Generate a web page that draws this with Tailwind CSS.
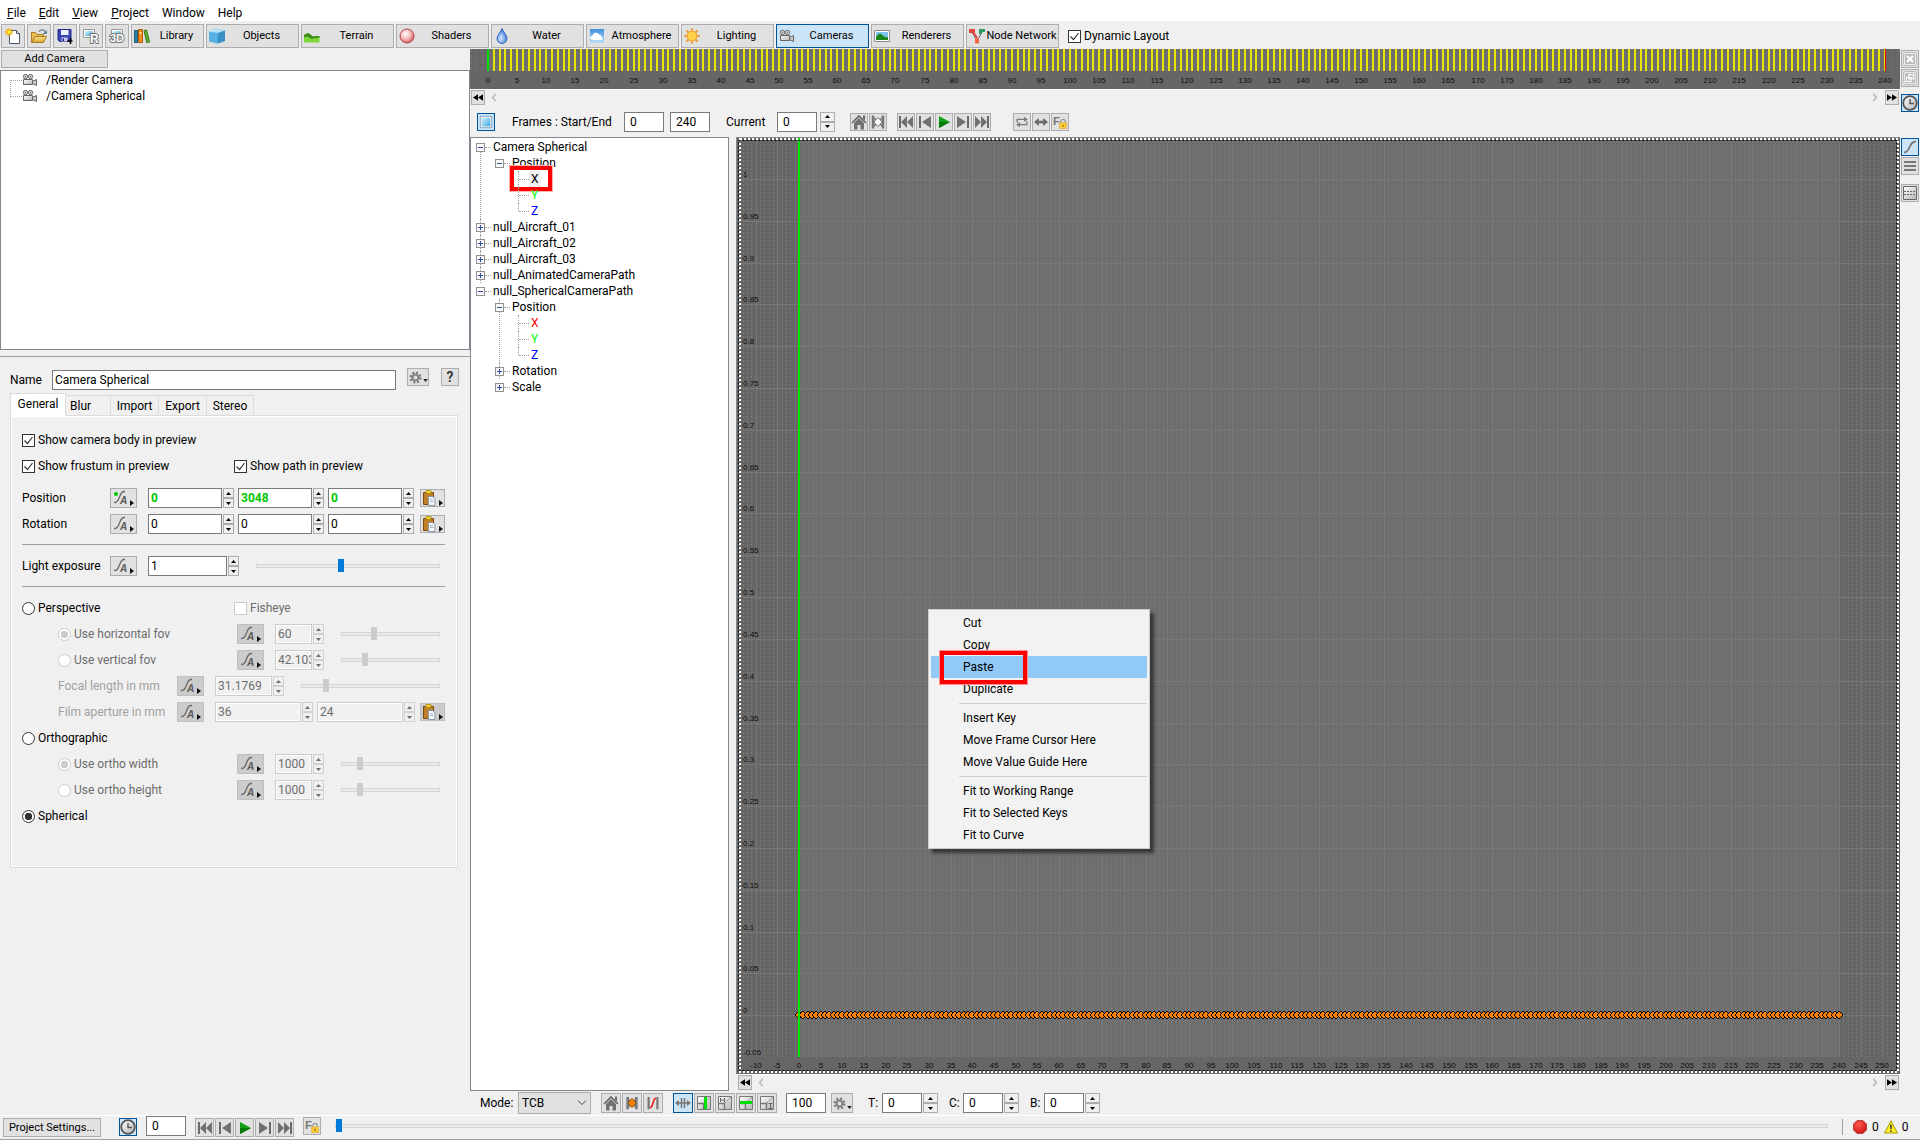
<!DOCTYPE html>
<html lang="en">
<head>
    <meta charset="UTF-8">
    <meta name="viewport" content="width=device-width, initial-scale=1.0">
    <script src="https://cdn.jsdelivr.net/npm/@tailwindcss/browser@4"></script>
    <title>Scene Editor - Cameras</title>
    <style>
        body { font-family: Roboto, "Open Sans", sans-serif; }
        /* native-looking form controls */
        input[type=text] { border: 1px solid #7a7a7a; background: #fff; height: 20px; min-width: 0; padding: 0 0 0 2px; }
        input[type=text]:disabled { border-color: #ccc; background: #f0f0f0; box-shadow: inset 0 0 0 1px #fff; color: #6d6d6d; }
        input[type=checkbox], input[type=radio] { appearance: none; width: 13px; height: 13px; flex: none; background: #fff; border: 1px solid #333; }
        input[type=radio] { border-radius: 50%; }
        input[type=checkbox]:disabled, input[type=radio]:disabled { border-color: #ccc; }
        input[type=checkbox]:checked { background: #fff url("data:image/svg+xml,%3Csvg xmlns='http://www.w3.org/2000/svg' viewBox='0 0 11 11'%3E%3Cpath d='M1.500 5.500l3 3 5-6.500' fill='none' stroke='%23333' stroke-width='1.200'/%3E%3C/svg%3E"); }
        input[type=radio]:checked { background: radial-gradient(circle, #333 3.5px, #fff 4px); }
        input[type=radio]:checked:disabled { background: radial-gradient(circle, #ccc 3.5px, #fff 4px); }
        input[type=range] { appearance: none; height: 13px; min-width: 0; background: transparent; }
        input[type=range]::-webkit-slider-runnable-track { height: 4px; background: #e7eaea; border: 1px solid #d6d6d6; }
        input[type=range]::-webkit-slider-thumb { appearance: none; width: 6px; height: 13px; margin-top: -6px; background: #0078d7; }
        input[type=range]:disabled::-webkit-slider-thumb { background: #ccc; }
        button { border: 1px solid #adadad; background: #e1e1e1; display: flex; align-items: center; justify-content: center; flex: none; }
        button:disabled { background: #ccc; border-color: #bfbfbf; }
        button[aria-pressed=true] { background: #cce4f7; border-color: #005499; }
        svg { flex: none; }
    </style>
</head>
<body class="h-screen flex flex-col overflow-hidden bg-[#f0f0f0] text-black text-[12px] leading-4">

<!-- icon set -->
<svg class="absolute size-0">
    <defs>
        <linearGradient id="g-blue" x1="0" y1="0" x2="1" y2="1"><stop offset="0" stop-color="#d4f0fc"/><stop offset="1" stop-color="#3fa9dd"/></linearGradient>
        <linearGradient id="g-sky" x1="0" y1="0" x2="0" y2="1"><stop offset="0" stop-color="#3d8fe0"/><stop offset="1" stop-color="#b9dcf7"/></linearGradient>
        <linearGradient id="g-gold" x1="0" y1="0" x2="0" y2="1"><stop offset="0" stop-color="#fbe08a"/><stop offset="1" stop-color="#dba22e"/></linearGradient>
        <linearGradient id="g-grey" x1="0" y1="0" x2="1" y2="1"><stop offset="0" stop-color="#ffffff"/><stop offset="1" stop-color="#b5b5b5"/></linearGradient>
        <radialGradient id="g-ball" cx=".4" cy=".35" r=".65"><stop offset="0" stop-color="#fff"/><stop offset=".6" stop-color="#f3b3b3"/><stop offset="1" stop-color="#d85f5f"/></radialGradient>
        <radialGradient id="g-drop" cx=".4" cy=".65" r=".6"><stop offset="0" stop-color="#d6e9ff"/><stop offset="1" stop-color="#3a78d8"/></radialGradient>
        <radialGradient id="g-red" cx=".4" cy=".3" r=".8"><stop offset="0" stop-color="#ff5a50"/><stop offset="1" stop-color="#c80e10"/></radialGradient>
    </defs>
    <symbol id="i-new" viewBox="0 0 16 16"><path d="M4.500 2.500h7l3 3v10h-10z" fill="#fff" stroke="#4a5670"/><path d="M11.500 2.500v3h3" fill="#dde3ee" stroke="#4a5670"/><path d="M4 0v8M0 4h8M1.200 1.200l5.600 5.600M6.800 1.200L1.200 6.800" stroke="#f5a800" stroke-width="1.400"/><circle cx="4" cy="4" r="1.800" fill="#fff04a"/></symbol>
    <symbol id="i-open" viewBox="0 0 16 16"><path d="M.5 14.500v-10h4l1.500 2h6.500v3" fill="#e8bd58" stroke="#a87a22"/><path d="M.5 14.500L4 8.500h11.500l-3 6z" fill="url(#g-gold)" stroke="#a87a22"/><path d="M8 3.500c2-2.500 5-2 6 0" fill="none" stroke="#5d7896" stroke-width="1.300"/><path d="M15.800 2v4h-4z" fill="#5d7896"/></symbol>
    <symbol id="i-save" viewBox="0 0 16 16"><path d="M1 1.500h13v12H2.500L1 12z" fill="#3c46b4" stroke="#232a86"/><path d="M4 2h7.500v5H4z" fill="#f0f2ff"/><path d="M4.500 9.500h6v4h-6z" fill="#c9cde6"/><path d="M5.500 10.500h1.500v2.500H5.500z" fill="#232a86"/><path d="M13.500 10v6M10.500 13h5" stroke="#000" stroke-width="1.500"/></symbol>
    <symbol id="i-r" viewBox="0 0 16 16"><path d="M.5 1.500h11v8H.5z" fill="#fff" stroke="#999"/><path d="M2 3h8v5H2z" fill="url(#g-blue)"/><text x="7" y="15" font-size="12" font-weight="700" font-family="Liberation Sans" fill="#fff" stroke="#777" stroke-width="2" paint-order="stroke">R</text></symbol>
    <symbol id="i-3d" viewBox="0 0 16 16"><path d="M2.500 1.500h11v8h-11z" fill="#fff" stroke="#999"/><path d="M4 3h8v5H4z" fill="url(#g-blue)"/><text x="1" y="14" font-size="11" font-weight="700" font-family="Liberation Sans" fill="#fff" stroke="#777" stroke-width="2" paint-order="stroke">3D</text></symbol>
    <symbol id="i-books" viewBox="0 0 16 16"><path d="M.5 2.500h3v12h-3z" fill="#2f86a8" stroke="#1d5a75"/><path d="M4.500 1.500h4v13h-4z" fill="#f08a1c" stroke="#b25c08"/><path d="M5.500 4h2v2h-2z" fill="#ffe0a0"/><path d="M10 2.500l2.600-.5 3 12-3 .5z" fill="#5fae30" stroke="#3b7d17"/></symbol>
    <symbol id="i-cube" viewBox="0 0 16 16"><path d="M0 3.500L7 .5l9 2v10.500l-8 2.500-8-2z" fill="#57b1e4"/><path d="M0 3.500L7 .5l9 2L9 5z" fill="#b9e3f8"/><path d="M9 5l7-2.500v10.500l-7.500 2.500z" fill="#3a8fc4"/></symbol>
    <symbol id="i-terrain" viewBox="0 0 16 16"><path d="M0 7c2-1 3-2 5-1.500S8 9 10 8.500 13 8 15.500 8v6.500H0z" fill="#7ed63c"/><path d="M0 7c2-1 3-2 5-1.500S8 9 10 8.500 13 8 15.500 8v2C11 9 9 12 6 10S2 9 0 9.500z" fill="#3f8a1a"/></symbol>
    <symbol id="i-ball" viewBox="0 0 16 16"><circle cx="8" cy="8" r="7" fill="url(#g-ball)" stroke="#b04848"/></symbol>
    <symbol id="i-drop" viewBox="0 0 16 16"><path d="M8 .5C9 4 13 7 13 10.500a5 5 0 0 1-10 0C3 7 7 4 8 .5z" fill="url(#g-drop)" stroke="#3467c0"/></symbol>
    <symbol id="i-cloud" viewBox="0 0 16 16"><path d="M1 1h14v14H1z" fill="url(#g-sky)"/><path d="M2 11.500a2.300 2.300 0 0 1 1.500-4 3.500 3.500 0 0 1 6.500-1 2.500 2.500 0 0 1 2.500 2.500 1.600 1.600 0 0 1 1 2.500c-2 1-9 1-11.500 0z" fill="#fff"/></symbol>
    <symbol id="i-sun" viewBox="0 0 16 16"><path d="M8 0v16M0 8h16M2.300 2.300l11.400 11.400M13.700 2.300L2.300 13.700" stroke="#f0a050" stroke-width="2"/><circle cx="8" cy="8" r="5" fill="#ffd24a" stroke="#f0a030"/></symbol>
    <symbol id="i-cam" viewBox="0 0 16 16"><circle cx="3.500" cy="4.500" r="2.200" fill="#ddd" stroke="#666"/><circle cx="8.500" cy="4.500" r="2.200" fill="#ddd" stroke="#666"/><circle cx="3.500" cy="4.500" r=".7" fill="#666"/><circle cx="8.500" cy="4.500" r=".7" fill="#666"/><path d="M1.500 7.500h9v5h-9z" fill="url(#g-grey)" stroke="#666"/><path d="M10.500 9.500l4-2v6l-4-2z" fill="#ccc" stroke="#666"/></symbol>
    <symbol id="i-pic" viewBox="0 0 16 16"><path d="M.5 2.500h15v11H.5z" fill="#fff" stroke="#888"/><path d="M2 4h12v8H2z" fill="#7cc4ee"/><path d="M2 9c2-3 3-4 5-3s3 4 7 3v3H2z" fill="#15871b"/></symbol>
    <symbol id="i-node" viewBox="0 0 16 16"><path d="M3 4l5 9 5-9" fill="none" stroke="#666"/><path d="M0 1h6v4H0z" fill="#e0483c"/><path d="M10 1h6v3h-3v2h-3z" fill="#2d9a60"/><path d="M4 4l4 6" stroke="#e0483c" stroke-width="2"/><path d="M6 10.500h4v5H6z" fill="#f0683c"/></symbol>
    <symbol id="i-home" viewBox="0 0 16 16"><path d="M1 9l7-7 7 7" fill="none" stroke="#666" stroke-width="1.600"/><path d="M12 1.500h2v5l-2-2z" fill="#666"/><path d="M3 9l5-5 5 5v6.500H9.500V11h-3v4.500H3z" fill="#707070"/></symbol>
    <symbol id="i-key" viewBox="0 0 16 16"><path d="M3 1.500v13M13 1.500v13" stroke="#777" stroke-width="2.500"/><path d="M3 3l4 4M13 3L9 7M3 13l4-4M13 13L9 9" stroke="#777" stroke-width="1.500"/><path d="M8 3.500l4 4.500-4 4.500L4 8z" fill="#fff" stroke="#777"/></symbol>
    <symbol id="i-keyo" viewBox="0 0 16 16"><path d="M3 1v14M13 1v14" stroke="#777" stroke-width="3"/><path d="M3 3l4 4M13 3L9 7M3 13l4-4M13 13L9 9" stroke="#777" stroke-width="2"/><path d="M8 2.500L12.500 8 8 13.500 3.500 8z" fill="#ff8000" stroke="#8a5010"/></symbol>
    <symbol id="i-keyr" viewBox="0 0 16 16"><path d="M3 1v14M13 1v14" stroke="#777" stroke-width="2.500"/><path d="M4.500 13.500c4 0 3-11 7-11" fill="none" stroke="#f01818" stroke-width="1.800"/></symbol>
    <symbol id="i-first" viewBox="0 0 16 16"><path d="M2 2v12" stroke="#6a6a6a" stroke-width="2"/><path d="M9 2v12L3 8zM15 2v12L9 8z" fill="#707070"/></symbol>
    <symbol id="i-prev" viewBox="0 0 16 16"><path d="M3 2v12" stroke="#6a6a6a" stroke-width="2"/><path d="M14 2v12L5 8z" fill="#707070"/></symbol>
    <symbol id="i-play" viewBox="0 0 16 16"><path d="M3 2l11 6-11 6z" fill="#11a011"/><path d="M3 8h11L3 14z" fill="#067806"/></symbol>
    <symbol id="i-next" viewBox="0 0 16 16"><path d="M13 2v12" stroke="#6a6a6a" stroke-width="2"/><path d="M2 2v12l9-6z" fill="#707070"/></symbol>
    <symbol id="i-last" viewBox="0 0 16 16"><path d="M14 2v12" stroke="#6a6a6a" stroke-width="2"/><path d="M7 2v12l6-6zM1 2v12l6-6z" fill="#707070"/></symbol>
    <symbol id="i-loop" viewBox="0 0 16 16"><path d="M2.500 8.500V5h9M13.500 7.500V11h-9" fill="none" stroke="#777" stroke-width="1.500"/><path d="M10.500 2l4 3-4 3zM5.500 8l-4 3 4 3z" fill="#777"/></symbol>
    <symbol id="i-wide" viewBox="0 0 16 16"><path d="M4 8h8" stroke="#6a6a6a" stroke-width="3"/><path d="M5.500 3.500v9L0 8zM10.500 3.500v9L16 8z" fill="#6a6a6a"/></symbol>
    <symbol id="i-flock" viewBox="0 0 16 16"><text x="0" y="11" font-size="13" font-weight="700" font-family="Liberation Sans" fill="#777">F</text><path d="M9 10V7.500a2.500 2.500 0 0 1 5 0V10" fill="none" stroke="#999" stroke-width="1.400"/><path d="M7.500 9h8v6.500h-8z" fill="#ffcc33" stroke="#d49a18" stroke-width=".6"/><path d="M11.500 11v2.500" stroke="#8a6010" stroke-width="1.400"/></symbol>
    <symbol id="i-clock" viewBox="0 0 16 16"><circle cx="8" cy="8" r="6.800" fill="url(#g-grey)" stroke="#555" stroke-width="1.800"/><path d="M8 4v4.500h4" fill="none" stroke="#555" stroke-width="1.400"/></symbol>
    <symbol id="i-gear" viewBox="0 0 16 16"><circle cx="8" cy="8" r="6" fill="none" stroke="#808080" stroke-width="3" stroke-dasharray="2.500 2.210"/><circle cx="8" cy="8" r="3.700" fill="none" stroke="#808080" stroke-width="2.600"/></symbol>
    <symbol id="i-down" viewBox="0 0 6 4"><path d="M0 0h6L3 4z" fill="#222"/></symbol>
    <symbol id="i-anim" viewBox="0 0 20 16"><path d="M0 12.500h1c5 0 4-11 9-11h1" fill="none" stroke="#6a6a6a" stroke-width="1.300"/><text x="6" y="14" font-size="10" font-weight="700" font-style="italic" font-family="Liberation Sans" fill="#5a5a5a">A</text><path d="M16 10v6l4-3z" fill="#111"/></symbol>
    <symbol id="i-clip" viewBox="0 0 20 16"><path d="M.5 2.500h10v12H.5z" fill="#c08028" stroke="#7a4a10"/><path d="M3 .5h5v3H3z" fill="#f4d020" stroke="#9a7a10" stroke-width=".6"/><path d="M5.500 6.500h4l2.500 2v7H5.500z" fill="#f4f8fc" stroke="#8a98a8"/><path d="M7 9.500h3M7 11.500h3.500" stroke="#a8b4c2"/><path d="M16 10v6l4-3z" fill="#111"/></symbol>
    <symbol id="i-view" viewBox="0 0 16 16"><path d="M1.500 1.500h13v13h-13z" fill="#fff" stroke="#7a9ab4"/><path d="M3 3h10v10H3z" fill="url(#g-blue)"/></symbol>
    <symbol id="i-close" viewBox="0 0 16 16"><rect x="1.500" y="1.500" width="13" height="13" rx="2" fill="#ececec" stroke="#bbb"/><rect x="3" y="3" width="10" height="10" rx="1" fill="#bdbdbd"/><path d="M5 5l6 6M11 5l-6 6" stroke="#fff" stroke-width="2.200"/></symbol>
    <symbol id="i-restore" viewBox="0 0 16 16"><rect x="1.500" y="1.500" width="13" height="13" rx="2" fill="#ececec" stroke="#bbb"/><rect x="3" y="3" width="10" height="10" rx="1" fill="#bdbdbd"/><path d="M7 4.500h4.500v4.500H7zM4.500 7.500h4.500v4H4.500z" fill="#bdbdbd" stroke="#fff" stroke-width="1.200"/></symbol>
    <symbol id="i-scurve" viewBox="0 0 16 16"><path d="M2 13.500c7 0 4-11 12-11" fill="none" stroke="#777" stroke-width="1.800"/></symbol>
    <symbol id="i-list" viewBox="0 0 16 16"><path d="M2 4h12M2 8h12M2 12h12" stroke="#777" stroke-width="1.800"/></symbol>
    <symbol id="i-split" viewBox="0 0 16 16"><path d="M1.500 1.500h13v13h-13z" fill="url(#g-grey)" stroke="#666"/><path d="M2 6.500h12M2 9.500h12" stroke="#666" stroke-dasharray="2 1"/></symbol>
    <symbol id="i-move" viewBox="0 0 16 16"><path d="M3 8h10M6.500 3v10M9.500 3v10" stroke="#777" stroke-width="1.500"/><path d="M4 5v6L0 8zM12 5v6l4-3z" fill="#777"/></symbol>
    <symbol id="i-frame" viewBox="0 0 16 16"><path d="M1.500 1.500h13v13h-13z" fill="url(#g-grey)" stroke="#777"/><path d="M1.500 8.500h6v6" fill="none" stroke="#777" stroke-width="1.400"/><path d="M8 8l6-6" stroke="#777" stroke-dasharray="1.500 1"/></symbol>
    <symbol id="i-ff" viewBox="0 0 12 8"><path d="M0 0v8l6-4zM6 0v8l6-4z" fill="#000"/></symbol>
    <symbol id="i-rw" viewBox="0 0 12 8"><path d="M12 0v8L6 4zM6 0v8L0 4z" fill="#000"/></symbol>
    <symbol id="i-cl" viewBox="0 0 6 10"><path d="M5 1L1.500 5 5 9" fill="none" stroke="#bfbfbf" stroke-width="2"/></symbol>
    <symbol id="i-cr" viewBox="0 0 6 10"><path d="M1 1l3.500 4L1 9" fill="none" stroke="#bfbfbf" stroke-width="2"/></symbol>
    <symbol id="i-stop" viewBox="0 0 14 14"><path d="M4 .5h6L13.500 4v6L10 13.500H4L.5 10V4z" fill="url(#g-red)" stroke="#a01010" stroke-width=".6"/></symbol>
    <symbol id="i-warn" viewBox="0 0 14 14"><path d="M7 .7L13.500 13H.5z" fill="#ffee20" stroke="#a89a10"/><path d="M7 4.500v4.500M7 10.200v1.600" stroke="#444" stroke-width="1.700"/></symbol>
</svg>

<header>
    <nav class="flex h-[21px] items-center gap-[13px] bg-white pl-[7px] pt-[4px]">
        <a href="#"><u>F</u>ile</a>
        <a href="#"><u>E</u>dit</a>
        <a href="#"><u>V</u>iew</a>
        <a href="#"><u>P</u>roject</a>
        <a href="#">Window</a>
        <a href="#">Help</a>
    </nav>
    <div class="flex h-[28px] items-start gap-[2px] pl-px pt-[3px] text-[11px]">
        <button class="size-[24px]" aria-label="New"><svg class="size-4"><use href="#i-new"/></svg></button>
        <button class="size-[24px]" aria-label="Open"><svg class="size-4"><use href="#i-open"/></svg></button>
        <button class="size-[24px]" aria-label="Save"><svg class="size-4"><use href="#i-save"/></svg></button>
        <button class="size-[24px]" aria-label="Render"><svg class="size-4"><use href="#i-r"/></svg></button>
        <button class="size-[24px]" aria-label="3D preview"><svg class="size-4"><use href="#i-3d"/></svg></button>
        <button class="h-[24px] w-[73px] pl-[2px]"><svg class="size-4"><use href="#i-books"/></svg><span class="flex-1">Library</span></button>
        <button class="h-[24px] w-[93px] pl-[2px]"><svg class="size-4"><use href="#i-cube"/></svg><span class="flex-1">Objects</span></button>
        <button class="h-[24px] w-[93px] pl-[2px]"><svg class="size-4"><use href="#i-terrain"/></svg><span class="flex-1">Terrain</span></button>
        <button class="h-[24px] w-[93px] pl-[2px]"><svg class="size-4"><use href="#i-ball"/></svg><span class="flex-1">Shaders</span></button>
        <button class="h-[24px] w-[93px] pl-[2px]"><svg class="size-4"><use href="#i-drop"/></svg><span class="flex-1">Water</span></button>
        <button class="h-[24px] w-[93px] pl-[2px]"><svg class="size-4"><use href="#i-cloud"/></svg><span class="flex-1">Atmosphere</span></button>
        <button class="h-[24px] w-[93px] pl-[2px]"><svg class="size-4"><use href="#i-sun"/></svg><span class="flex-1">Lighting</span></button>
        <button class="h-[24px] w-[93px] pl-[2px]" aria-pressed="true"><svg class="size-4"><use href="#i-cam"/></svg><span class="flex-1">Cameras</span></button>
        <button class="h-[24px] w-[93px] pl-[2px]"><svg class="size-4"><use href="#i-pic"/></svg><span class="flex-1">Renderers</span></button>
        <button class="h-[24px] w-[93px] pl-[2px]"><svg class="size-4"><use href="#i-node"/></svg><span class="flex-1">Node Network</span></button>
        <label class="ml-[7px] flex h-[24px] items-center gap-[3px] text-[12px]"><input type="checkbox" checked>Dynamic Layout</label>
    </div>
</header>

<div class="flex min-h-0 flex-1">
    <!-- left column: camera list and its settings -->
    <aside class="flex w-[470px] shrink-0 flex-col">
        <button class="ml-px mt-px h-[18px] w-[107px] text-[11px]">Add Camera</button>
        <ul class="mt-[2px] h-[280px] border border-[#828790] bg-white pt-px">
            <li class="relative flex h-4 items-center gap-[8px] pl-[21px] before:absolute before:left-[9px] before:top-2 before:h-[17px] before:w-[12px] before:border-y before:border-l before:border-dotted before:border-[#a0a0a0]"><svg class="size-4"><use href="#i-cam"/></svg>/Render Camera</li>
            <li class="flex h-4 items-center gap-[8px] pl-[21px]"><svg class="size-4"><use href="#i-cam"/></svg>/Camera Spherical</li>
        </ul>
        <section class="mt-[6px] flex-1 border-t border-[#a0a0a0] pl-[10px] pt-[11px]">
            <div class="flex h-[22px] items-start">
                <label for="cam-name" class="mt-1 w-[42px]">Name</label>
                <input type="text" id="cam-name" class="mt-[2px] w-[344px]" value="Camera Spherical">
                <button class="ml-[11px] h-[18px] w-[22px] gap-px" aria-label="Options"><svg class="size-[13px]"><use href="#i-gear"/></svg><svg class="mb-[3px] h-[3px] w-[5px] self-end"><use href="#i-down"/></svg></button>
                <button class="ml-[12px] size-[18px] text-[14px] font-semibold text-[#333]" aria-label="Help">?</button>
            </div>
            <div class="mt-[3px] flex h-[22px] items-end">
                <button class="z-10 -mb-px h-[23px] w-[56px] border-[#dcdcdc]! border-b-0! bg-white! pb-[2px]">General</button>
                <button class="h-[20px] w-[45px] justify-start! border-[#dcdcdc]! border-b-0! border-l-0! bg-[#f0f0f0]! pl-1">Blur</button>
                <button class="h-[20px] w-[48px] border-[#dcdcdc]! border-b-0! border-l-0! bg-[#f0f0f0]!">Import</button>
                <button class="h-[20px] w-[48px] border-[#dcdcdc]! border-b-0! border-l-0! bg-[#f0f0f0]!">Export</button>
                <button class="h-[20px] w-[47px] border-[#dcdcdc]! border-b-0! border-l-0! bg-[#f0f0f0]!">Stereo</button>
            </div>
            <div class="h-[453px] w-[448px] border border-[#dcdcdc] pl-[11px] pr-[12px] pt-[11px] shadow-[inset_0_0_0_1px_#fff]">
                <div class="flex h-[26px] items-center">
                    <label class="flex items-center gap-[3px]"><input type="checkbox" checked>Show camera body in preview</label>
                </div>
                <div class="flex h-[26px] items-center">
                    <label class="flex w-[212px] items-center gap-[3px]"><input type="checkbox" checked>Show frustum in preview</label>
                    <label class="flex items-center gap-[3px]"><input type="checkbox" checked>Show path in preview</label>
                </div>
                <div class="mt-[6px] flex h-[26px] items-center">
                    <span class="w-[88px]">Position</span>
                    <button class="relative h-[20px] w-[27px]" aria-label="Animate position"><svg class="h-4 w-5"><use href="#i-anim"/></svg><i class="absolute left-[3px] top-[3px] size-[4px] rounded-full bg-[#00c800]"></i></button>
                    <input type="text" aria-label="Position X" class="ml-[11px] w-[74px] font-bold text-[#00c800]" value="0"><span data-spin></span>
                    <input type="text" aria-label="Position Y" class="ml-1 w-[74px] font-bold text-[#00c800]" value="3048"><span data-spin></span>
                    <input type="text" aria-label="Position Z" class="ml-1 w-[74px] font-bold text-[#00c800]" value="0"><span data-spin></span>
                    <button class="ml-[6px] h-[18px] w-[25px]" aria-label="Copy position"><svg class="h-4 w-5"><use href="#i-clip"/></svg></button>
                </div>
                <div class="flex h-[26px] items-center">
                    <span class="w-[88px]">Rotation</span>
                    <button class="h-[20px] w-[27px]" aria-label="Animate rotation"><svg class="h-4 w-5"><use href="#i-anim"/></svg></button>
                    <input type="text" aria-label="Rotation X" class="ml-[11px] w-[74px]" value="0"><span data-spin></span>
                    <input type="text" aria-label="Rotation Y" class="ml-1 w-[74px]" value="0"><span data-spin></span>
                    <input type="text" aria-label="Rotation Z" class="ml-1 w-[74px]" value="0"><span data-spin></span>
                    <button class="ml-[6px] h-[18px] w-[25px]" aria-label="Copy rotation"><svg class="h-4 w-5"><use href="#i-clip"/></svg></button>
                </div>
                <hr class="mb-2 mt-[7px] border-[#a0a0a0]">
                <div class="flex h-[26px] items-center">
                    <label for="exposure" class="w-[88px]">Light exposure</label>
                    <button class="h-[20px] w-[27px]" aria-label="Animate exposure"><svg class="h-4 w-5"><use href="#i-anim"/></svg></button>
                    <input type="text" id="exposure" class="ml-[11px] w-[79px]" value="1"><span data-spin></span>
                    <input type="range" aria-label="Light exposure" class="ml-[17px] mr-[5px] flex-1" value="46">
                </div>
                <hr class="mb-2 mt-[7px] border-[#a0a0a0]">
                <div class="flex h-[26px] items-center">
                    <label class="flex w-[212px] items-center gap-[3px]"><input type="radio" name="projection">Perspective</label>
                    <label class="flex items-center gap-[3px] text-[#6d6d6d]"><input type="checkbox" disabled>Fisheye</label>
                </div>
                <div class="flex h-[26px] items-center text-[#6d6d6d]">
                    <label class="ml-9 flex w-[179px] items-center gap-[3px]"><input type="radio" name="fov" checked disabled>Use horizontal fov</label>
                    <button class="h-[20px] w-[27px]" disabled aria-label="Animate horizontal fov"><svg class="h-4 w-5"><use href="#i-anim"/></svg></button>
                    <input type="text" aria-label="Horizontal fov" class="ml-[11px] w-[37px]" value="60" disabled><span data-spin="off"></span>
                    <input type="range" aria-label="Horizontal fov" class="ml-[17px] mr-[5px] flex-1" value="32" disabled>
                </div>
                <div class="flex h-[26px] items-center text-[#6d6d6d]">
                    <label class="ml-9 flex w-[179px] items-center gap-[3px]"><input type="radio" name="fov" disabled>Use vertical fov</label>
                    <button class="h-[20px] w-[27px]" disabled aria-label="Animate vertical fov"><svg class="h-4 w-5"><use href="#i-anim"/></svg></button>
                    <input type="text" aria-label="Vertical fov" class="ml-[11px] w-[37px]" value="42.103" disabled><span data-spin="off"></span>
                    <input type="range" aria-label="Vertical fov" class="ml-[17px] mr-[5px] flex-1" value="22" disabled>
                </div>
                <div class="flex h-[26px] items-center text-[#6d6d6d]">
                    <label for="focal" class="ml-9 w-[119px] text-[#a0a0a0]">Focal length in mm</label>
                    <button class="h-[20px] w-[27px]" disabled aria-label="Animate focal length"><svg class="h-4 w-5"><use href="#i-anim"/></svg></button>
                    <input type="text" id="focal" class="ml-[11px] w-[57px]" value="31.1769" disabled><span data-spin="off"></span>
                    <input type="range" aria-label="Focal length" class="ml-[17px] mr-[5px] flex-1" value="16" disabled>
                </div>
                <div class="flex h-[26px] items-center text-[#6d6d6d]">
                    <label for="aperture" class="ml-9 w-[119px] text-[#a0a0a0]">Film aperture in mm</label>
                    <button class="h-[20px] w-[27px]" disabled aria-label="Animate aperture"><svg class="h-4 w-5"><use href="#i-anim"/></svg></button>
                    <input type="text" id="aperture" class="ml-[11px] w-[86px]" value="36" disabled><span data-spin="off"></span>
                    <input type="text" aria-label="Film aperture height" class="ml-1 w-[86px]" value="24" disabled><span data-spin="off"></span>
                    <button class="ml-[5px] h-[18px] w-[25px]" disabled aria-label="Copy aperture"><svg class="h-4 w-5"><use href="#i-clip"/></svg></button>
                </div>
                <div class="flex h-[26px] items-center">
                    <label class="flex items-center gap-[3px]"><input type="radio" name="projection">Orthographic</label>
                </div>
                <div class="flex h-[26px] items-center text-[#6d6d6d]">
                    <label class="ml-9 flex w-[179px] items-center gap-[3px]"><input type="radio" name="ortho" checked disabled>Use ortho width</label>
                    <button class="h-[20px] w-[27px]" disabled aria-label="Animate ortho width"><svg class="h-4 w-5"><use href="#i-anim"/></svg></button>
                    <input type="text" aria-label="Ortho width" class="ml-[11px] w-[37px]" value="1000" disabled><span data-spin="off"></span>
                    <input type="range" aria-label="Ortho width" class="ml-[17px] mr-[5px] flex-1" value="17" disabled>
                </div>
                <div class="flex h-[26px] items-center text-[#6d6d6d]">
                    <label class="ml-9 flex w-[179px] items-center gap-[3px]"><input type="radio" name="ortho" disabled>Use ortho height</label>
                    <button class="h-[20px] w-[27px]" disabled aria-label="Animate ortho height"><svg class="h-4 w-5"><use href="#i-anim"/></svg></button>
                    <input type="text" aria-label="Ortho height" class="ml-[11px] w-[37px]" value="1000" disabled><span data-spin="off"></span>
                    <input type="range" aria-label="Ortho height" class="ml-[17px] mr-[5px] flex-1" value="17" disabled>
                </div>
                <div class="flex h-[26px] items-center">
                    <label class="flex items-center gap-[3px]"><input type="radio" name="projection" checked>Spherical</label>
                </div>
            </div>
        </section>
    </aside>

    <!-- right column: timeline, channel tree and curve editor -->
    <main class="flex min-w-0 flex-1 flex-col">
        <div class="h-[41px] border-b border-white"><svg id="timeline" class="h-full w-full bg-[#666]"></svg></div>
        <div class="flex h-[16px] items-start">
            <button class="ml-px h-[15px] w-[14px]" aria-label="Scroll to start"><svg class="h-[7px] w-[10px]"><use href="#i-rw"/></svg></button>
            <svg class="ml-[6px] mt-[3px] h-[9px] w-[6px]"><use href="#i-cl"/></svg>
            <svg class="ml-auto mr-[7px] mt-[3px] h-[9px] w-[6px]"><use href="#i-cr"/></svg>
            <button class="mr-px h-[15px] w-[14px]" aria-label="Scroll to end"><svg class="h-[7px] w-[10px]"><use href="#i-ff"/></svg></button>
        </div>
        <div class="flex h-[31px] items-center pl-[7px]">
            <button class="size-[18px]" aria-pressed="true" aria-label="Show view"><svg class="size-[14px]"><use href="#i-view"/></svg></button>
            <label for="f-start" class="ml-[17px] w-[112px]">Frames : Start/End</label>
            <input type="text" id="f-start" class="w-[40px] pl-[5px]!" value="0">
            <input type="text" aria-label="End frame" class="ml-[6px] w-[40px] pl-[5px]!" value="240">
            <label for="f-cur" class="ml-[16px] w-[51px]">Current</label>
            <input type="text" id="f-cur" class="w-[40px] pl-[5px]!" value="0"><span class="w-[2px]"></span><span data-spin="wide"></span>
            <div class="ml-[15px] flex gap-px">
                <button class="size-[18px]" aria-label="Home"><svg class="size-4"><use href="#i-home"/></svg></button>
                <button class="size-[18px]" aria-label="Fit keys"><svg class="size-4"><use href="#i-key"/></svg></button>
            </div>
            <div class="ml-[10px] flex gap-px">
                <button class="size-[18px]" aria-label="First"><svg class="size-4"><use href="#i-first"/></svg></button>
                <button class="size-[18px]" aria-label="Previous"><svg class="size-4"><use href="#i-prev"/></svg></button>
                <button class="size-[18px]" aria-label="Play"><svg class="size-4"><use href="#i-play"/></svg></button>
                <button class="size-[18px]" aria-label="Next"><svg class="size-4"><use href="#i-next"/></svg></button>
                <button class="size-[18px]" aria-label="Last"><svg class="size-4"><use href="#i-last"/></svg></button>
            </div>
            <div class="ml-[22px] flex gap-px">
                <button class="size-[18px]" aria-label="Loop"><svg class="size-[14px]"><use href="#i-loop"/></svg></button>
                <button class="size-[18px]" aria-label="Bounce"><svg class="size-[14px]"><use href="#i-wide"/></svg></button>
                <button class="size-[18px]" aria-label="Lock frame rate"><svg class="size-[14px]"><use href="#i-flock"/></svg></button>
            </div>
        </div>
        <div class="flex min-h-0 flex-1 gap-[7px]">
            <ul class="w-[259px] shrink-0 border border-[#828790] bg-white pl-[5px] pt-px">
                <li class="relative before:absolute before:bottom-0 before:left-1 before:top-2 before:border-l before:border-dotted before:border-[#a0a0a0]">
                    <div data-node="open">Camera Spherical</div>
                    <ul class="pl-[19px]">
                        <li>
                            <div data-node="open">Position</div>
                            <ul class="ml-[23px]">
                                <li data-leaf>
                                    <span class="bg-[#f0f0f0] px-[2px]">X</span>
                                    <i class="absolute -left-2 -top-[5px] h-[25px] w-[42px] border-4 border-[#f00] shadow-[0_0_0_1px_#ffb0b0]"></i>
                                </li>
                                <li data-leaf><span class="px-[2px] text-[#0f0]">Y</span></li>
                                <li data-leaf="last"><span class="px-[2px] text-[#00f]">Z</span></li>
                            </ul>
                        </li>
                    </ul>
                </li>
                <li class="relative before:absolute before:bottom-0 before:left-1 before:top-0 before:border-l before:border-dotted before:border-[#a0a0a0]"><div data-node="closed">null_Aircraft_01</div></li>
                <li class="relative before:absolute before:bottom-0 before:left-1 before:top-0 before:border-l before:border-dotted before:border-[#a0a0a0]"><div data-node="closed">null_Aircraft_02</div></li>
                <li class="relative before:absolute before:bottom-0 before:left-1 before:top-0 before:border-l before:border-dotted before:border-[#a0a0a0]"><div data-node="closed">null_Aircraft_03</div></li>
                <li class="relative before:absolute before:bottom-0 before:left-1 before:top-0 before:border-l before:border-dotted before:border-[#a0a0a0]"><div data-node="closed">null_AnimatedCameraPath</div></li>
                <li>
                    <div data-node="open">null_SphericalCameraPath</div>
                    <ul class="pl-[19px]">
                        <li class="relative before:absolute before:bottom-0 before:left-1 before:top-0 before:border-l before:border-dotted before:border-[#a0a0a0]">
                            <div data-node="open">Position</div>
                            <ul class="ml-[23px]">
                                <li data-leaf><span class="px-[2px] text-[#f00]">X</span></li>
                                <li data-leaf><span class="px-[2px] text-[#0f0]">Y</span></li>
                                <li data-leaf="last"><span class="px-[2px] text-[#00f]">Z</span></li>
                            </ul>
                        </li>
                        <li class="relative before:absolute before:bottom-0 before:left-1 before:top-0 before:border-l before:border-dotted before:border-[#a0a0a0]"><div data-node="closed">Rotation</div></li>
                        <li><div data-node="closed">Scale</div></li>
                    </ul>
                </li>
            </ul>
            <div class="flex min-w-0 flex-1 flex-col">
                <div class="relative min-h-0 flex-1 border-b border-white">
                    <svg id="graph" class="h-full w-full bg-[#666]"></svg>
                    <!-- context menu -->
                    <div role="menu" class="absolute left-[192px] top-[472px] w-[222px] border border-[#ccc] bg-[#f2f2f2] p-[2px] shadow-[4px_4px_3px_rgba(0,0,0,0.5)]">
                        <div role="menuitem" class="flex h-[22px] items-center pl-[32px]">Cut</div>
                        <div role="menuitem" class="flex h-[22px] items-center pl-[32px]">Copy</div>
                        <div role="menuitem" class="relative flex h-[22px] items-center bg-[#91c9f7] pl-[32px]">Paste
                            <i class="absolute -top-[5px] left-[9px] h-[33px] w-[87px] border-4 border-[#f00] shadow-[0_0_0_1px_#ff9090]"></i>
                        </div>
                        <div role="menuitem" class="flex h-[22px] items-center pl-[32px]">Duplicate</div>
                        <hr class="my-[3px] ml-[28px] border-[#d0d0d0]">
                        <div role="menuitem" class="flex h-[22px] items-center pl-[32px]">Insert Key</div>
                        <div role="menuitem" class="flex h-[22px] items-center pl-[32px]">Move Frame Cursor Here</div>
                        <div role="menuitem" class="flex h-[22px] items-center pl-[32px]">Move Value Guide Here</div>
                        <hr class="my-[3px] ml-[28px] border-[#d0d0d0]">
                        <div role="menuitem" class="flex h-[22px] items-center pl-[32px]">Fit to Working Range</div>
                        <div role="menuitem" class="flex h-[22px] items-center pl-[32px]">Fit to Selected Keys</div>
                        <div role="menuitem" class="flex h-[22px] items-center pl-[32px]">Fit to Curve</div>
                    </div>
                </div>
                <div class="flex h-[16px] items-start">
                    <button class="ml-[2px] h-[15px] w-[14px]" aria-label="Scroll to start"><svg class="h-[7px] w-[10px]"><use href="#i-rw"/></svg></button>
                    <svg class="ml-[6px] mt-[3px] h-[9px] w-[6px]"><use href="#i-cl"/></svg>
                    <svg class="ml-auto mr-[7px] mt-[3px] h-[9px] w-[6px]"><use href="#i-cr"/></svg>
                    <button class="mr-px h-[15px] w-[14px]" aria-label="Scroll to end"><svg class="h-[7px] w-[10px]"><use href="#i-ff"/></svg></button>
                </div>
            </div>
        </div>
        <div class="flex h-[24px] items-center pl-[10px]">
            <label for="mode" class="w-[38px]">Mode:</label>
            <div class="relative">
                <select id="mode" class="h-[22px] w-[73px] appearance-none border border-[#adadad] bg-[#e1e1e1] pl-[3px]"><option>TCB</option></select>
                <svg class="absolute right-1 top-2 h-[6px] w-[10px]" viewBox="0 0 10 6"><path d="M1 .5l4 4 4-4" fill="none" stroke="#444"/></svg>
            </div>
            <div class="ml-[10px] flex gap-px">
                <button class="size-[20px]" aria-label="Home"><svg class="size-4"><use href="#i-home"/></svg></button>
                <button class="size-[20px]" aria-label="Fit keys"><svg class="size-[14px]"><use href="#i-keyo"/></svg></button>
                <button class="size-[20px]" aria-label="Fit curve"><svg class="size-[14px]"><use href="#i-keyr"/></svg></button>
            </div>
            <div class="ml-[10px] flex gap-px">
                <button class="size-[20px]" aria-pressed="true" aria-label="Move keys"><svg class="size-[16px]"><use href="#i-move"/></svg></button>
                <button class="size-[20px]" aria-label="Scale time"><svg class="size-[16px]"><use href="#i-frame"/><path d="M8 2h3v12H8z" fill="#00e000"/></svg></button>
                <button class="size-[20px]" aria-label="Fit time"><svg class="size-[16px]"><use href="#i-frame"/><path d="M3.500 3v4M3.500 5h4M7.500 3v4" fill="none" stroke="#666"/></svg></button>
                <button class="size-[20px]" aria-label="Scale values"><svg class="size-[16px]"><use href="#i-frame"/><path d="M2 6h12v3H2z" fill="#00e000"/></svg></button>
                <button class="size-[20px]" aria-label="Fit values"><svg class="size-[16px]"><use href="#i-frame"/><path d="M9.500 8.500h4M11.500 8.500v5M9.500 13.500h4" fill="none" stroke="#666"/></svg></button>
            </div>
            <input type="text" aria-label="Scale percent" class="ml-[9px] w-[40px] pl-[5px]!" value="100">
            <button class="ml-[5px] h-[20px] w-[22px] gap-px" aria-label="Options"><svg class="size-[13px]"><use href="#i-gear"/></svg><svg class="mb-[3px] h-[3px] w-[5px] self-end"><use href="#i-down"/></svg></button>
            <label for="tcb-t" class="ml-[15px] w-[14px]">T:</label>
            <input type="text" id="tcb-t" class="w-[40px] pl-[5px]!" value="0"><span data-spin="wide"></span>
            <label for="tcb-c" class="ml-[11px] w-[14px]">C:</label>
            <input type="text" id="tcb-c" class="w-[40px] pl-[5px]!" value="0"><span data-spin="wide"></span>
            <label for="tcb-b" class="ml-[11px] w-[14px]">B:</label>
            <input type="text" id="tcb-b" class="w-[40px] pl-[5px]!" value="0"><span data-spin="wide"></span>
        </div>
    </main>

    <!-- dock buttons -->
    <div class="flex w-[20px] shrink-0 flex-col gap-px pl-px pt-px">
        <button class="size-[18px]" aria-label="Close"><svg class="size-[16px]"><use href="#i-close"/></svg></button>
        <button class="size-[18px]" aria-label="Restore"><svg class="size-[16px]"><use href="#i-restore"/></svg></button>
        <button class="mt-[6px] size-[18px]" aria-pressed="true" aria-label="Timeline"><svg class="size-[16px]"><use href="#i-clock"/></svg></button>
        <button class="mt-[25px] size-[18px]" aria-pressed="true" aria-label="Curves"><svg class="size-[16px]"><use href="#i-scurve"/></svg></button>
        <button class="size-[18px]" aria-label="Sheet"><svg class="size-[16px]"><use href="#i-list"/></svg></button>
        <button class="mt-[8px] size-[18px]" aria-label="Split"><svg class="size-[16px]"><use href="#i-split"/></svg></button>
    </div>
</div>

<footer class="flex h-[25px] items-start border-b border-t border-b-[#a0a0a0] border-t-white pl-[3px]">
    <button class="mt-[2px] h-[19px] w-[98px] text-[11px]">Project Settings...</button>
    <button class="ml-[18px] mt-[2px] size-[18px]" aria-pressed="true" aria-label="Timeline"><svg class="size-[16px]"><use href="#i-clock"/></svg></button>
    <input type="text" aria-label="Current frame" class="ml-[9px] w-[40px] pl-[5px]!" value="0">
    <div class="ml-[9px] mt-[2px] flex gap-px">
        <button class="size-[19px]" aria-label="First"><svg class="size-4"><use href="#i-first"/></svg></button>
        <button class="size-[19px]" aria-label="Previous"><svg class="size-4"><use href="#i-prev"/></svg></button>
        <button class="size-[19px]" aria-label="Play"><svg class="size-4"><use href="#i-play"/></svg></button>
        <button class="size-[19px]" aria-label="Next"><svg class="size-4"><use href="#i-next"/></svg></button>
        <button class="size-[19px]" aria-label="Last"><svg class="size-4"><use href="#i-last"/></svg></button>
    </div>
    <button class="ml-[9px] mt-px size-[18px]" aria-label="Lock frame rate"><svg class="size-[14px]"><use href="#i-flock"/></svg></button>
    <input type="range" aria-label="Frame" class="ml-[14px] mt-[3px] flex-1" value="0">
    <div class="ml-[14px] mt-[3px] h-[16px] w-px bg-[#a0a0a0]"></div>
    <div class="ml-[10px] mt-[3px] flex w-[67px] items-center">
        <svg class="size-[14px]"><use href="#i-stop"/></svg><span class="ml-[5px]">0</span>
        <svg class="ml-[5px] size-[14px]"><use href="#i-warn"/></svg><span class="ml-[4px]">0</span>
    </div>
</footer>

<script>
    // spin buttons
    document.querySelectorAll('[data-spin]').forEach(el => {
        const kind = el.dataset.spin;
        const off = kind === 'off';
        el.className = kind === 'wide' ? 'ml-px flex w-[15px] flex-col' : 'ml-px flex w-[11px] flex-col';
        const cls = off ? 'h-[10px] w-full border-[#d0d0d0]! bg-[#f0f0f0]!' : 'h-[10px] w-full bg-[#f0f0f0]!';
        const fill = off ? '#6d6d6d' : '#000';
        el.innerHTML =
            `<button class="${cls}" ${off ? 'disabled' : ''} aria-label="Up"><svg class="h-[3px] w-[5px]" viewBox="0 0 5 3"><path d="M0 3h5L2.500 0z" fill="${fill}"/></svg></button>` +
            `<button class="${cls}" ${off ? 'disabled' : ''} aria-label="Down"><svg class="h-[3px] w-[5px]" viewBox="0 0 5 3"><path d="M0 0h5L2.500 3z" fill="${fill}"/></svg></button>`;
    });

    // tree rows
    document.querySelectorAll('[data-node]').forEach(el => {
        const open = el.dataset.node === 'open';
        el.className = 'relative flex h-4 items-center';
        el.insertAdjacentHTML('afterbegin',
            `<button class="size-[9px] border-[#919191]! bg-[#f8f8f8]!" aria-label="Toggle"><svg class="size-[7px]" viewBox="0 0 7 7" shape-rendering="crispEdges"><path d="M1 3h5v1H1z${open ? '' : 'M3 1h1v5H3z'}" fill="#2f4f9f"/></svg></button><i class="mr-[2px] w-[6px] border-t border-dotted border-[#a0a0a0]"></i>`);
    });
    document.querySelectorAll('[data-leaf]').forEach(el => {
        el.className = 'relative flex h-4 items-center leading-4';
        el.insertAdjacentHTML('afterbegin',
            `<i class="${el.dataset.leaf === 'last' ? 'h-2 self-start border-l border-dotted border-[#a0a0a0]' : 'h-4 border-l border-dotted border-[#a0a0a0]'}"></i><i class="w-[10px] border-t border-dotted border-[#a0a0a0]"></i>`);
    });

    const rect = (x, y, w, h, fill) => `<rect x="${x}" y="${y}" width="${w}" height="${h}" fill="${fill}"/>`;
    const label = (x, y, text, anchor) => `<text x="${x}" y="${y}" text-anchor="${anchor}">${text}</text>`;
    const textGroup = s => `<g font-family="Liberation Sans" font-size="8" fill="#0c0c0c">${s}</g>`;

    // timeline strip with one key on every frame
    function drawTimeline() {
        const svg = document.getElementById('timeline');
        const w = svg.clientWidth, x0 = 18, step = (w - x0 - 15) / 240;
        let s = rect(x0, 0, w - x0 - 15, 22, '#6e6e6e'), t = '';
        for (let f = -3; f <= 242; f++) {
            const x = Math.round(x0 + f * step);
            if (f < 0 || f > 240) s += `<path d="M${x + .5} 0v22" stroke="#747474" stroke-dasharray="3 3"/>`;
            else s += rect(x - 1, 0, f === 240 ? 1 : 2, 22, f === 0 ? '#00e000' : '#e6e600');
            if (f >= 0 && f <= 240 && f % 5 === 0) t += label(x, 34, f, 'middle');
        }
        s += rect(w - 15, 0, 1, 22, '#f00000');
        svg.innerHTML = s + textGroup(t);
    }

    // curve editor grid, frame cursor and keys
    function drawGraph() {
        const svg = document.getElementById('graph');
        const w = svg.clientWidth, h = svg.clientHeight;
        const x0 = 63, step = (w - x0 - 61) / 240, bottom = h - 17, vstep = (bottom - 42) / 21;
        let s = rect(x0, 0, w - x0 - 61, bottom, '#6e6e6e'), t = '', keys = '';
        for (let f = -13; f <= 253; f++) {
            const x = Math.round(x0 + f * step);
            if (f % 5 === 0) s += rect(x, 0, 1, bottom, '#787878');
            else s += `<path d="M${x + .5} 3V${bottom}" stroke="#787878" stroke-dasharray="2 2"/>`;
            if (f >= 0 && f <= 240) keys += `<path d="M${x - 4} ${h - 59}l4-4 4 4-4 4z"/>`;
        }
        for (let f = -10; f <= 250; f += 5) t += label(Math.round(x0 + f * step), h - 6, f, 'middle');
        for (let i = 0; i <= 21; i++) {
            const y = Math.round(42 + i * vstep);
            if (i < 21) s += rect(0, y, w, 1, '#787878');
            t += label(7, y - 2, String(+(1 - i * 0.05).toFixed(2)), 'start');
        }
        s += rect(0, bottom, w, 17, '#666');
        s += `<g fill="#ff8000" stroke="#000">${keys}</g>` + rect(x0 - 1, 0, 2, bottom, '#00e600') + textGroup(t);
        // focus border
        s += `<rect x="4" y="2" width="${w - 6}" height="${h - 4}" fill="none" stroke="#fff" stroke-width="2" stroke-dasharray="2 2"/>`;
        s += `<rect x="2.500" y="3.500" width="${w - 6}" height="${h - 7}" fill="none" stroke="#000" stroke-dasharray="2 2"/>`;
        s += rect(0, 0, w, 1, '#828790') + rect(0, 0, 1, h, '#828790');
        svg.innerHTML = s;
    }

    new ResizeObserver(drawTimeline).observe(document.getElementById('timeline').parentElement);
    new ResizeObserver(drawGraph).observe(document.getElementById('graph').parentElement);
</script>
</body>
</html>
